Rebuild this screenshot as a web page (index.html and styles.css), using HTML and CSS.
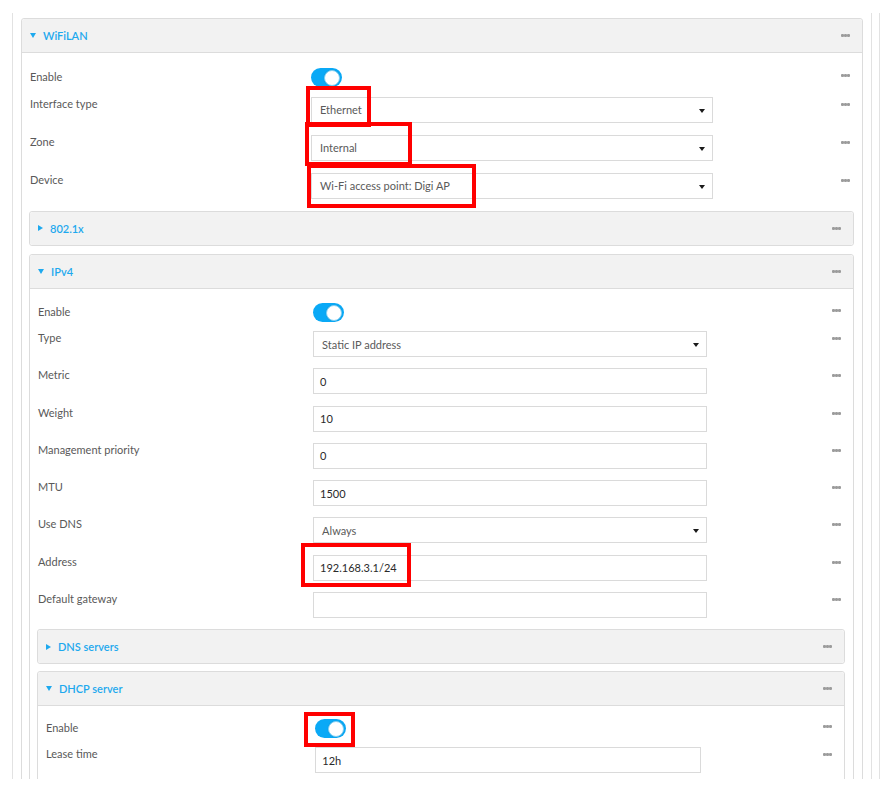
FILE: index.html
```html
<!DOCTYPE html>
<html>
<head>
<meta charset="utf-8">
<link rel="stylesheet" href="styles.css">
</head>
<body>
<div class="viewport">
  <div class="outer">
    <section class="panel">
      <header class="panel-head">
        <span class="title"><span class="caret down"></span>WiFiLAN</span>
        <span class="dots"><i></i><i></i><i></i></span>
      </header>
      <div class="panel-body top">
        <div class="row toggle-row">
          <span class="label">Enable</span>
          <div class="ctl"><span class="toggle"></span></div>
          <span class="dots"><i></i><i></i><i></i></span>
        </div>
        <div class="row wide">
          <span class="label">Interface type</span>
          <div class="ctl"><div class="select">Ethernet<span class="arrow"></span></div></div>
          <span class="dots"><i></i><i></i><i></i></span>
        </div>
        <div class="row wide">
          <span class="label">Zone</span>
          <div class="ctl"><div class="select">Internal<span class="arrow"></span></div></div>
          <span class="dots"><i></i><i></i><i></i></span>
        </div>
        <div class="row wide">
          <span class="label">Device</span>
          <div class="ctl"><div class="select">Wi-Fi access point: Digi AP<span class="arrow"></span></div></div>
          <span class="dots"><i></i><i></i><i></i></span>
        </div>

        <section class="panel sub collapsed">
          <header class="panel-head">
            <span class="title"><span class="caret right"></span>802.1x</span>
            <span class="dots"><i></i><i></i><i></i></span>
          </header>
        </section>

        <section class="panel sub">
          <header class="panel-head">
            <span class="title"><span class="caret down"></span>IPv4</span>
            <span class="dots"><i></i><i></i><i></i></span>
          </header>
          <div class="panel-body">
            <div class="row toggle-row">
              <span class="label">Enable</span>
              <div class="ctl"><span class="toggle"></span></div>
              <span class="dots"><i></i><i></i><i></i></span>
            </div>
            <div class="row">
              <span class="label">Type</span>
              <div class="ctl"><div class="select">Static IP address<span class="arrow"></span></div></div>
              <span class="dots"><i></i><i></i><i></i></span>
            </div>
            <div class="row">
              <span class="label">Metric</span>
              <div class="ctl"><div class="input">0</div></div>
              <span class="dots"><i></i><i></i><i></i></span>
            </div>
            <div class="row">
              <span class="label">Weight</span>
              <div class="ctl"><div class="input">10</div></div>
              <span class="dots"><i></i><i></i><i></i></span>
            </div>
            <div class="row">
              <span class="label">Management priority</span>
              <div class="ctl"><div class="input">0</div></div>
              <span class="dots"><i></i><i></i><i></i></span>
            </div>
            <div class="row">
              <span class="label">MTU</span>
              <div class="ctl"><div class="input">1500</div></div>
              <span class="dots"><i></i><i></i><i></i></span>
            </div>
            <div class="row">
              <span class="label">Use DNS</span>
              <div class="ctl"><div class="select">Always<span class="arrow"></span></div></div>
              <span class="dots"><i></i><i></i><i></i></span>
            </div>
            <div class="row">
              <span class="label">Address</span>
              <div class="ctl"><div class="input">192.168.3.1/24</div></div>
              <span class="dots"><i></i><i></i><i></i></span>
            </div>
            <div class="row">
              <span class="label">Default gateway</span>
              <div class="ctl"><div class="input"></div></div>
              <span class="dots"><i></i><i></i><i></i></span>
            </div>

            <section class="panel sub collapsed tight">
              <header class="panel-head">
                <span class="title"><span class="caret right"></span>DNS servers</span>
                <span class="dots"><i></i><i></i><i></i></span>
              </header>
            </section>

            <section class="panel sub">
              <header class="panel-head">
                <span class="title"><span class="caret down"></span>DHCP server</span>
                <span class="dots"><i></i><i></i><i></i></span>
              </header>
              <div class="panel-body dhcp">
                <div class="row toggle-row short">
                  <span class="label">Enable</span>
                  <div class="ctl"><span class="toggle"></span></div>
                  <span class="dots"><i></i><i></i><i></i></span>
                </div>
                <div class="row">
                  <span class="label">Lease time</span>
                  <div class="ctl"><div class="input">12h</div></div>
                  <span class="dots"><i></i><i></i><i></i></span>
                </div>
                <div class="spacer"></div>
              </div>
            </section>
          </div>
        </section>
      </div>
    </section>
  </div>
</div>

<div class="mark m1"></div>
<div class="mark m2"></div>
<div class="mark m3"></div>
<div class="mark m4"></div>
<div class="mark m5"></div>
</body>
</html>
```

FILE: styles.css
```css
html, body {
  margin: 0;
  padding: 0;
  background: #ffffff;
}
body {
  font-family: Lato, "Noto Sans", sans-serif;
  font-size: 11px;
  color: #5a5a5a;
  position: relative;
  width: 891px;
  height: 798px;
  overflow: hidden;
}
.viewport {
  margin-top: 13px;
  width: 879px;
  height: 766px;
  border-right: 1px solid #e2e2e2;
  overflow: hidden;
}
.outer {
  margin-left: 12px;
  width: 860px;
  height: 766px;
  border-left: 1px solid #e2e2e2;
  border-right: 1px solid #e2e2e2;
  padding: 5px 8px 0 8px;
  box-sizing: border-box;
}
.panel {
  border: 1px solid #dcdcdc;
  border-radius: 3px;
  background: #ffffff;
}
.panel-head {
  height: 33px;
  background: #f2f2f2;
  border-bottom: 1px solid #dcdcdc;
  border-radius: 3px 3px 0 0;
  display: flex;
  align-items: center;
  justify-content: space-between;
  padding: 0 12px 0 8px;
}
.collapsed .panel-head {
  border-bottom: none;
  border-radius: 3px;
}
.title {
  color: #1ea9ee;
  font-weight: 600;
  font-size: 11px;
  display: flex;
  align-items: center;
}
.caret {
  display: inline-block;
  width: 0;
  height: 0;
  margin-right: 7px;
}
.caret.down {
  border-left: 3px solid transparent;
  border-right: 3px solid transparent;
  border-top: 5px solid #1ea9ee;
}
.caret.right {
  border-top: 3px solid transparent;
  border-bottom: 3px solid transparent;
  border-left: 5px solid #1ea9ee;
  margin-right: 7px;
}
.dots {
  display: flex;
  flex: none;
  width: 9px;
  height: 3px;
}
.dots i {
  display: block;
  flex: none;
  width: 3px;
  height: 3px;
  background: #9c9c9c;
  border-radius: 1px;
}
.panel-body {
  padding-top: 14px;
}
.panel-body.top {
  padding-top: 15px;
}
.panel-body.dhcp {
  padding-top: 13px;
}
.row {
  display: grid;
  grid-template-columns: 34.4% 47.9% 1fr;
  align-items: start;
  margin-bottom: 11.3px;
}
.row.wide {
  margin-bottom: 12px;
}
.row.toggle-row {
  margin-bottom: 9.5px;
}
.row.toggle-row.short {
  margin-bottom: 9px;
}
.label {
  padding-left: 8px;
  line-height: 14px;
  color: #595959;
  white-space: nowrap;
}
.toggle-row .label {
  line-height: 17px;
}
.row .dots {
  justify-self: end;
  margin-right: 12px;
  margin-top: 6px;
}
.toggle {
  display: block;
  width: 31px;
  height: 19px;
  border-radius: 10px;
  background: #0aa9f6;
  position: relative;
}
.toggle::after {
  content: "";
  position: absolute;
  right: 2px;
  top: 2px;
  width: 14px;
  height: 14px;
  border-radius: 50%;
  background: #ffffff;
  border: 0.5px solid #7fd0f5;
  box-shadow: 0 0 1px rgba(0, 0, 0, 0.15);
}
.select, .input {
  height: 26px;
  border: 1px solid #dadada;
  box-sizing: border-box;
  display: flex;
  align-items: center;
  position: relative;
  background: #ffffff;
  white-space: nowrap;
}
.select {
  padding-left: 8px;
  color: #5a5a5a;
}
.input {
  padding-left: 6px;
  color: #2a2a2a;
}
.arrow {
  position: absolute;
  right: 7px;
  top: 11px;
  width: 0;
  height: 0;
  border-left: 3px solid transparent;
  border-right: 3px solid transparent;
  border-top: 4px solid #1a1a1a;
}
.sub {
  margin: 0 8px 8px 7px;
}
.sub.tight {
  margin-bottom: 7px;
}
.spacer {
  height: 60px;
}
.mark {
  position: absolute;
  border: 4px solid #ff0000;
  box-sizing: border-box;
}
.m1 { left: 306px; top: 86px; width: 65px; height: 41px; }
.m2 { left: 305px; top: 122px; width: 107px; height: 44px; }
.m3 { left: 307px; top: 164px; width: 169px; height: 44px; }
.m4 { left: 301px; top: 543px; width: 110px; height: 44px; }
.m5 { left: 304px; top: 712px; width: 51px; height: 35px; }
```
